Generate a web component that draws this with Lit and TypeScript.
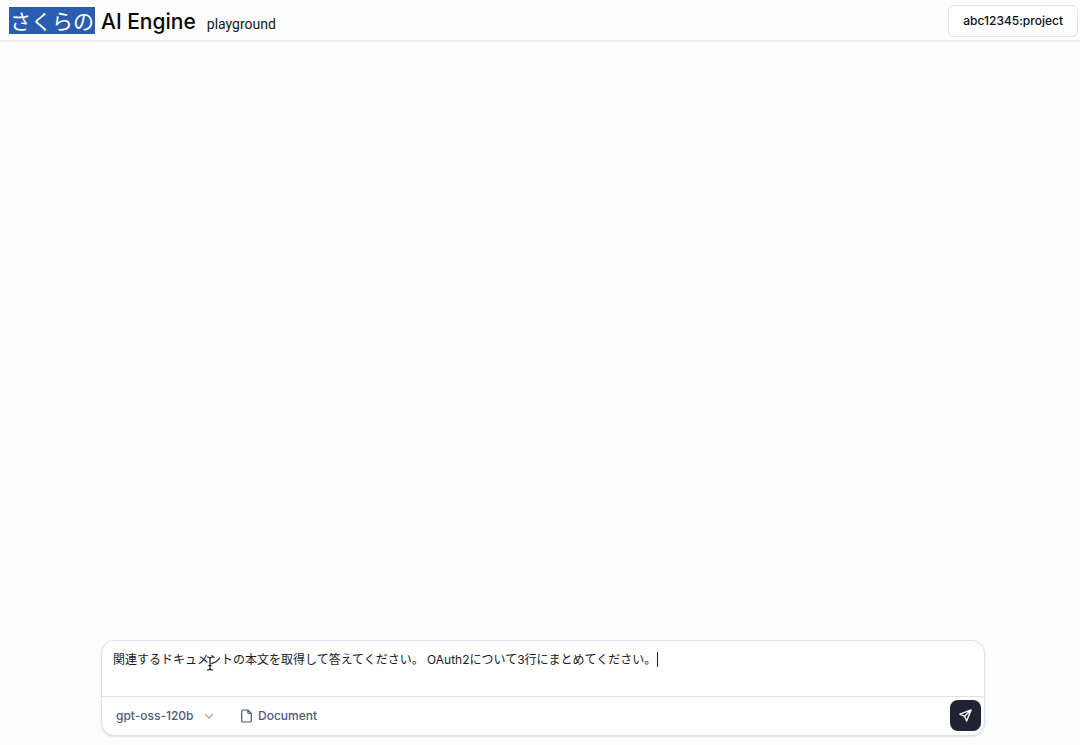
import { LitElement, html, css } from "lit";
import { customElement, state } from "lit/decorators.js";

@customElement("app-header")
class AppHeader extends LitElement {
  static styles = css`
    :host { display: block; }
    .bar {
      display: flex; align-items: center; justify-content: space-between;
      box-sizing: border-box; height: 42px; padding: 1px 2px 0 9px;
      border-bottom: 2px solid #eeeeef;
    }
    .brand { display: flex; align-items: baseline; margin: 0; color: #08090b; white-space: nowrap; }
    .mark {
      background: #2a5db0; color: #fdfdfd; padding: 0 1px; margin-right: 6px;
      font: 400 21px/27px "Noto Sans CJK JP", sans-serif;
    }
    .name { font: 500 21px/27px Inter, "Noto Sans CJK JP", sans-serif; margin-right: 11px; }
    .sub { font: 400 14px/20px Roboto, sans-serif; color: #15171c; }
    .project {
      font: 500 12px/16px Inter, sans-serif; color: #0c0f18; background: #fefefe;
      border: 1px solid #dfe6f0; border-radius: 6px; padding: 7px 14px; cursor: pointer;
    }
  `;
  render() {
    return html`
      <header class="bar">
        <h1 class="brand">
          <span class="mark">さくらの</span><span class="name">AI Engine</span><span class="sub">playground</span>
        </h1>
        <button class="project" type="button">abc12345:project</button>
      </header>
    `;
  }
}

@customElement("chat-composer")
class ChatComposer extends LitElement {
  @state() private text = "関連するドキュメントの本文を取得して答えてください。 OAuth2について3行にまとめてください。";

  static styles = css`
    :host { display: block; }
    .card {
      border: 1px solid #d8e1ee; border-radius: 13px; background: #fefefe;
      box-shadow: 0 1px 2px #dbe4f0;
    }
    .entry { position: relative; display: flex; border-bottom: 1px solid #dfe3e9; }
    .prompt {
      flex: 1; box-sizing: border-box; height: 55px; padding: 10px 11px; margin: 0;
      border: 0; outline: 0; resize: none; background: transparent; color: #171b26;
      font: 400 12px/18px Inter, "Noto Sans CJK JP", sans-serif;
    }
    .caret { position: absolute; left: 555px; top: 11px; width: 1px; height: 15px; background: #171b26; }
    .pointer { position: absolute; left: 104px; top: 15px; }
    .tools { display: flex; align-items: center; padding: 3px 3px 4px 14px; color: #4d5c77; }
    .model { display: flex; align-items: center; }
    .choice {
      appearance: none; border: 0; padding: 0; margin: 0; background: transparent; color: inherit;
      font: 500 12px/16px Inter, sans-serif; cursor: pointer;
    }
    .chevron { margin: 0 25px 0 9px; color: #a3acba; }
    .document {
      display: flex; align-items: center; gap: 5px; border: 0; padding: 0; background: transparent;
      color: inherit; font: 500 12px/16px Inter, sans-serif; cursor: pointer;
    }
    .send {
      display: grid; place-items: center; width: 31px; height: 31px; margin-left: auto; padding: 0;
      border: 0; border-radius: 8px; background: #1e2433; color: #f4f5f8; cursor: pointer;
    }
    svg { display: block; fill: none; stroke: currentColor; stroke-linecap: round; stroke-linejoin: round; }
  `;
  render() {
    return html`
      <form class="card" @submit=${(e: Event) => e.preventDefault()}>
        <div class="entry">
          <textarea class="prompt" aria-label="メッセージ" spellcheck="false" .value=${this.text}
            @input=${(e: Event) => (this.text = (e.target as HTMLTextAreaElement).value)}></textarea>
          <span class="caret"></span>
          <svg class="pointer" width="8" height="15" viewBox="0 0 8 15" stroke-width="1.1" aria-hidden="true">
            <path d="M1.5 1Q3.4 1 4 2.2Q4.6 1 6.5 1M4 2.2V12.8M1.5 14Q3.4 14 4 12.8Q4.6 14 6.5 14M2.8 9.5H5.2"/>
          </svg>
        </div>
        <div class="tools">
          <label class="model">
            <select class="choice" aria-label="モデル"><option>gpt-oss-120b</option></select>
            <svg class="chevron" width="12" height="12" viewBox="0 0 24 24" stroke-width="2.4" aria-hidden="true">
              <path d="m5 9 7 7 7-7"/>
            </svg>
          </label>
          <button class="document" type="button">
            <svg width="13" height="14" viewBox="0 0 13 14" stroke-width="1.2" aria-hidden="true">
              <path d="M7.8 1H3a1.3 1.3 0 0 0-1.3 1.3v9.4A1.3 1.3 0 0 0 3 13h7a1.3 1.3 0 0 0 1.3-1.3V4.5zM7.8 1v2.5a1 1 0 0 0 1 1h2.5"/>
            </svg>
            Document
          </button>
          <button class="send" type="submit" aria-label="送信">
            <svg width="15" height="15" viewBox="0 0 16 16" stroke-width="1.5" aria-hidden="true">
              <path d="M14 2 2 6.5l5 2.4 2.2 5zM14 2 7 8.9"/>
            </svg>
          </button>
        </div>
      </form>
    `;
  }
}

@customElement("app-root")
class AppRoot extends LitElement {
  static styles = css`
    :host { display: flex; flex-direction: column; min-height: 100vh; background: #fdfdfd; }
    .thread { flex: 1; }
    .dock { padding: 0 95px 9px 101px; }
  `;
  render() {
    return html`
      <app-header></app-header>
      <main class="thread"></main>
      <div class="dock"><chat-composer></chat-composer></div>
    `;
  }
}
